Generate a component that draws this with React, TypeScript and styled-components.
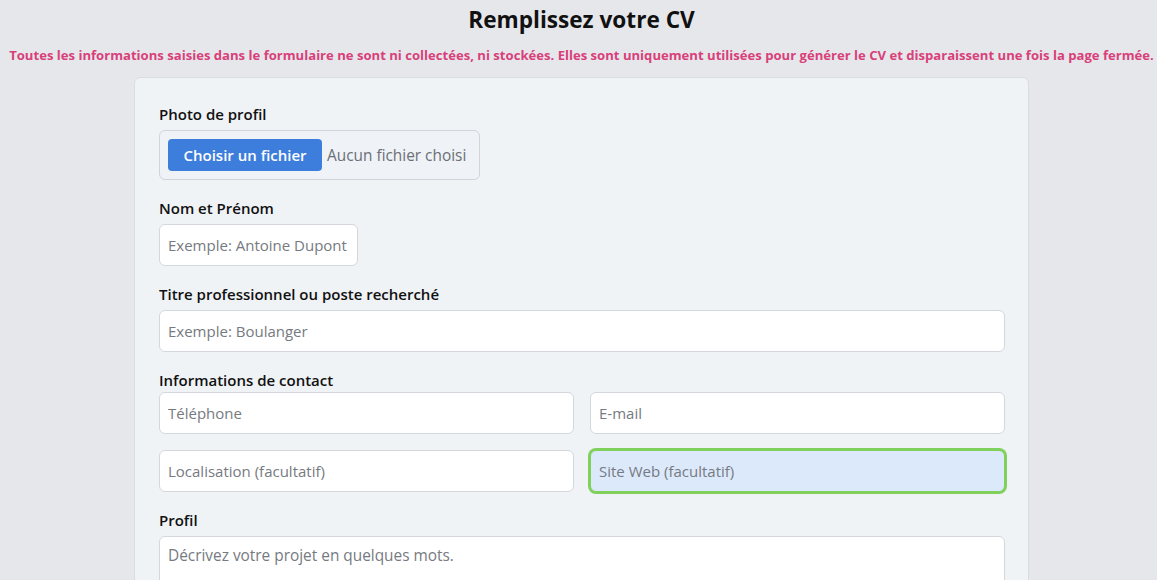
import React from 'react';
import styled, { createGlobalStyle } from 'styled-components';

const GlobalStyle = createGlobalStyle`
  html, body {
    margin: 0;
    padding: 0;
    background: #e6e7eb;
    font-family: "Open Sans", "Noto Sans", sans-serif;
    color: #111;
  }
  * {
    box-sizing: border-box;
  }
`;

const Page = styled.div`
  display: flex;
  flex-direction: column;
  align-items: center;
  padding-left: 6px;
`;

const Title = styled.h1`
  margin: 4px 0 0;
  font-size: 22.6px;
  line-height: 32px;
  font-weight: 700;
`;

const Notice = styled.p`
  margin: 10px 0 0;
  font-size: 13.1px;
  line-height: 18px;
  font-weight: 700;
  color: #d9407a;
  white-space: nowrap;
`;

const Card = styled.form`
  width: 895px;
  margin-top: 13px;
  padding: 26px 23px 24px 24px;
  background: #f0f3f6;
  border: 1px solid #d9dce1;
  border-radius: 6px;
  display: flex;
  flex-direction: column;
  gap: 18px;
`;

const Field = styled.div<{ $tight?: boolean }>`
  display: flex;
  flex-direction: column;
  gap: ${(p) => (p.$tight ? '2px' : '6px')};
`;

const Label = styled.label`
  font-size: 15px;
  line-height: 20px;
  font-weight: 600;
  color: #111;
`;

const FileBox = styled.div`
  display: flex;
  align-items: center;
  gap: 5px;
  width: 321px;
  height: 50px;
  padding: 0 8px;
  border: 1px solid #d1d5da;
  border-radius: 6px;
  background: #eff2f6;
`;

const FileButton = styled.span`
  display: inline-flex;
  align-items: center;
  justify-content: center;
  width: 154px;
  height: 32px;
  border-radius: 4px;
  background: #3d7ddc;
  color: #fff;
  font-size: 15px;
  font-weight: 600;
`;

const FileName = styled.span`
  font-size: 15.4px;
  color: #6b6f76;
  white-space: nowrap;
`;

const Input = styled.input<{ $width?: number; $focused?: boolean }>`
  width: ${(p) => (p.$width ? `${p.$width}px` : '100%')};
  height: 42px;
  padding: 0 8px;
  font-family: inherit;
  font-size: 15px;
  color: #111;
  border-radius: 6px;
  outline: none;
  background: ${(p) => (p.$focused ? '#dce9fb' : '#fff')};
  border: 1px solid ${(p) => (p.$focused ? '#7fd15c' : '#d4d7dc')};
  box-shadow: ${(p) => (p.$focused ? '0 0 0 2px #7fd15c' : 'none')};

  &::placeholder {
    color: #767a81;
  }
`;

const Grid = styled.div`
  display: grid;
  grid-template-columns: 1fr 1fr;
  column-gap: 16px;
  row-gap: 16px;
`;

const TextArea = styled.textarea`
  width: 100%;
  height: 90px;
  padding: 8px 8px;
  font-family: inherit;
  font-size: 15.4px;
  line-height: 22px;
  border: 1px solid #d4d7dc;
  border-radius: 6px;
  background: #fff;
  resize: vertical;
  outline: none;

  &::placeholder {
    color: #767a81;
  }
`;

const App: React.FC = () => {
  return (
    <Page>
      <GlobalStyle />
      <Title>Remplissez votre CV</Title>
      <Notice>
        Toutes les informations saisies dans le formulaire ne sont ni collectées, ni stockées. Elles sont
        uniquement utilisées pour générer le CV et disparaissent une fois la page fermée.
      </Notice>
      <Card onSubmit={(e) => e.preventDefault()}>
        <Field>
          <Label>Photo de profil</Label>
          <FileBox>
            <FileButton>Choisir un fichier</FileButton>
            <FileName>Aucun fichier choisi</FileName>
          </FileBox>
        </Field>

        <Field>
          <Label>Nom et Prénom</Label>
          <Input $width={199} placeholder="Exemple: Antoine Dupont" />
        </Field>

        <Field>
          <Label>Titre professionnel ou poste recherché</Label>
          <Input placeholder="Exemple: Boulanger" />
        </Field>

        <Field $tight>
          <Label>Informations de contact</Label>
          <Grid>
            <Input placeholder="Téléphone" />
            <Input placeholder="E-mail" />
            <Input placeholder="Localisation (facultatif)" />
            <Input $focused placeholder="Site Web (facultatif)" />
          </Grid>
        </Field>

        <Field>
          <Label>Profil</Label>
          <TextArea placeholder="Décrivez votre projet en quelques mots." />
        </Field>
      </Card>
    </Page>
  );
};

export default App;
